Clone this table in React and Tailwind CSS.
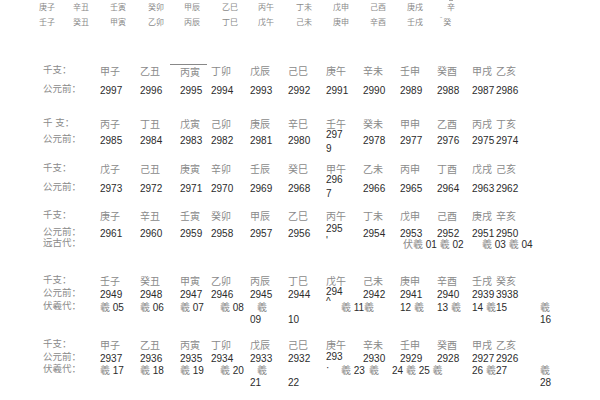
import React from "react";

// 表格列宽：标签 + 12 列 + 尾列
const COLS =
  "grid grid-cols-[60px_40px_40px_31px_39px_38px_38px_37px_37px_37px_35px_24px_38px_1fr]";
const HEAD_COLS =
  "grid grid-cols-[34px_37px_38px_36px_38px_36px_38px_37px_37px_37px_40px_1fr]";

const isCjk = (p) => /[\u3400-\u9fff\uff1a]/.test(p);

function Run({ s }) {
  const parts = s.match(/[\u3400-\u9fff\uff1a]+|[^\u3400-\u9fff\uff1a]+/g) || [];
  return parts.map((p, i) =>
    isCjk(p) ? (
      <span key={i} className="text-[10px] text-[#8a8a8a]">{p}</span>
    ) : (
      <span key={i} className="text-[10px] text-[#2b2b2b]">{p}</span>
    )
  );
}

function Line({ label = "", cells = [], cls = "" }) {
  return (
    <div className={`${COLS} h-[12px] leading-[12px] whitespace-nowrap pl-[40px] ${cls}`}>
      <div className="pl-[3px] text-[9.5px] text-[#8a8a8a]">{label}</div>
      {cells.map((c, i) => {
        const o = typeof c === "string" ? { t: c } : c;
        return (
          <div key={i} className={o.c || ""}>
            {o.t.split("\n").map((ln, j) => (
              <div key={j} className={o.lh || "leading-[12px]"}>
                <Run s={ln} />
              </div>
            ))}
          </div>
        );
      })}
    </div>
  );
}

const gz = (s) => s.split(" ");
const nums = (from) => Array.from({ length: 12 }, (_, i) => String(from - i));

function numRow(from, wrap, wrapCls, lh, last) {
  const r = nums(from);
  r[6] = { t: wrap, c: wrapCls || "-mt-[6px]", lh: lh || "leading-[12px]" };
  if (last) r[11] = last;
  return r;
}

export default function App() {
  const row1 = gz("甲子 乙丑 丙寅 丁卯 戊辰 己巳 庚午 辛未 壬申 癸酉 甲戌 乙亥");
  row1[2] = { t: "丙寅", c: "border-t border-[#888] -ml-[10px] pl-[10px] w-[37px] leading-[11px]" };
  const n1 = nums(2997);

  return (
    <div className="w-[600px] h-[400px] overflow-hidden bg-white pt-[2px] font-['Liberation_Sans','Noto_Sans_CJK_SC',sans-serif]">
      {/* 顶部残行 */}
      <div className={`${HEAD_COLS} h-[12px] leading-[12px] pl-[39px] text-[8px] text-[#8a8a8a] whitespace-nowrap`}>
        {gz("庚子 辛丑 壬寅 癸卯 甲辰 乙巳 丙午 丁未 戊申 己酉 庚戌").map((t, i) => (
          <div key={i}>{t}</div>
        ))}
        <div className="-mt-[2px]">
          <div className="h-[2px] w-[4px] ml-[2px] border-t border-[#aaa]" />
          <div className="leading-[12px]">辛</div>
        </div>
      </div>
      <div className={`${HEAD_COLS} h-[12px] leading-[12px] pl-[39px] mt-[3px] text-[8px] text-[#8a8a8a] whitespace-nowrap`}>
        {gz("壬子 癸丑 甲寅 乙卯 丙辰 丁巳 戊午 己未 庚申 辛酉 壬戌").map((t, i) => (
          <div key={i}>{t}</div>
        ))}
        <div className="-ml-[7px] flex items-start">
          <span className="text-[7px] leading-[6px] mr-[1px]">ˉ</span>
          <span>癸</span>
        </div>
      </div>

      {/* 第一组 */}
      <Line label="千支：" cells={row1} cls="mt-[35px]" />
      <Line label="公元前：" cells={n1} cls="mt-[7px]" />

      {/* 第二组 */}
      <Line label="千 支：" cells={gz("丙子 丁丑 戊寅 己卯 庚辰 辛巳 壬午 癸未 甲申 乙酉 丙戌 丁亥")} cls="mt-[22px]" />
      <Line label="公元前：" cells={numRow(2985, "297\n9")} cls="mt-[4px]" />

      {/* 第三组 */}
      <Line label="千支：" cells={gz("戊子 己丑 庚寅 辛卯 壬辰 癸巳 甲午 乙未 丙申 丁酉 戊戌 己亥")} cls="mt-[17px]" />
      <Line label="公元前：" cells={numRow(2973, "296\n7", "-mt-[9px]")} cls="mt-[7px]" />

      {/* 第四组 */}
      <Line label="千支：" cells={gz("庚子 辛丑 壬寅 癸卯 甲辰 乙巳 丙午 丁未 戊申 己酉 庚戌 辛亥")} cls="mt-[16px]" />
      <Line label="公元前：" cells={numRow(2961, "295\n'", "-mt-[4px]", "leading-[10px]")} cls="mt-[5px]" />
      <Line
        label="远古代："
        cells={["", "", "", "", "", "", "", "", { t: "伏羲 01 羲 02", c: "pl-[3px]" }, "", { t: "羲 03 羲 04", c: "pl-[10px]" }]}
        cls="-mt-[1px]"
      />

      {/* 第五组 */}
      <Line label="千支：" cells={gz("壬子 癸丑 甲寅 乙卯 丙辰 丁巳 戊午 己未 庚申 辛酉 壬戌 癸亥")} cls="mt-[25px]" />
      <Line label="公元前：" cells={numRow(2949, "294\n^", "-mt-[1px]", "leading-[8px]", "3938")} cls="mt-[1px]" />
      <Line
        label="伏羲代："
        cells={[
          "羲 05", "羲 06", "羲 07",
          { t: "羲 08", c: "pl-[9px]" },
          { t: "羲", c: "pl-[7px]" },
          "",
          { t: "羲 11", c: "pl-[15px]" },
          { t: "羲", c: "pl-[1px]" },
          "12 羲", "13 羲", "14 羲", "15",
          { t: "羲", c: "pl-[6px]" },
        ]}
        cls="mt-[1px]"
      />
      <Line cells={["", "", "", "", "09", "10", "", "", "", "", "", "", { t: "16", c: "pl-[6px]" }]} />

      {/* 第六组 */}
      <Line label="千支：" cells={gz("甲子 乙丑 丙寅 丁卯 戊辰 己巳 庚午 辛未 壬申 癸酉 甲戌 乙亥")} cls="mt-[14px]" />
      <Line label="公元前：" cells={numRow(2937, "293\n·", "-mt-[1px]", "leading-[9px]")} cls="mt-[1px]" />
      <Line
        label="伏羲代："
        cells={[
          "羲 17", "羲 18", "羲 19",
          { t: "羲 20", c: "pl-[9px]" },
          { t: "羲", c: "pl-[7px]" },
          "",
          { t: "羲 23", c: "pl-[15px]" },
          { t: "羲", c: "pl-[6px]" },
          { t: "24 羲 25 羲", c: "-ml-[8px]" },
          "",
          "26 羲", "27",
          { t: "羲", c: "pl-[6px]" },
        ]}
      />
      <Line cells={["", "", "", "", "21", "22", "", "", "", "", "", "", { t: "28", c: "pl-[6px]" }]} />
    </div>
  );
}
